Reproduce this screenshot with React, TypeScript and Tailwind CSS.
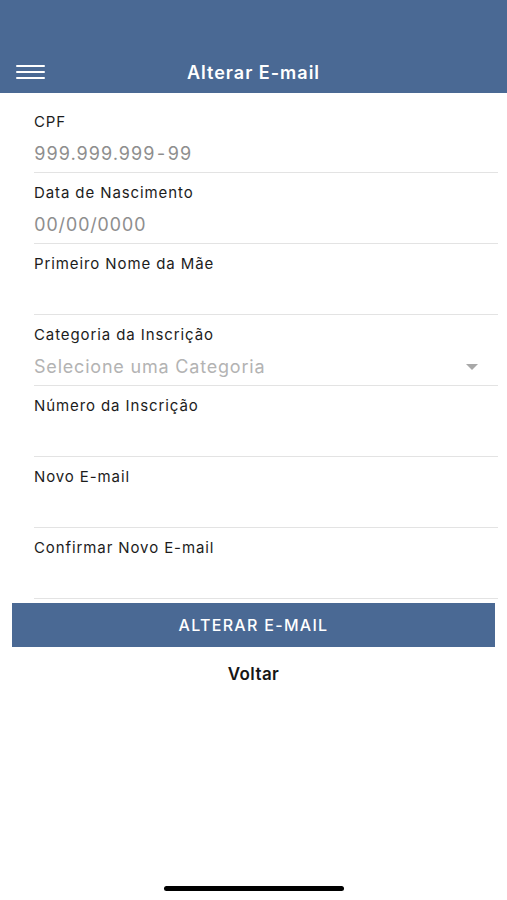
import type { FC } from "react";

interface FieldProps {
  label: string;
  value?: string;
  select?: boolean;
}

const Field: FC<FieldProps> = ({ label, value, select }) => {
  return (
    <div className="ml-[34px] mr-[9px] h-[71px] border-b border-[#e3e3e3] pt-[10px]">
      <p className="text-[15px] leading-[20px] tracking-[0.9px] text-[#1c1c1c]">{label}</p>
      <div className="mt-[10px] flex h-[24px] items-center justify-between">
        <span
          className={`text-[18px] leading-[24px] ${
            select ? "tracking-[0.8px] text-[#b3b3b3]" : "tracking-[0.6px] tabular-nums text-[#8e8e8e]"
          }`}
        >
          {value}
        </span>
        {select ? (
          <svg width="12" height="6" viewBox="0 0 12 6" className="mr-[20px]">
            <path d="M0 0 L12 0 L6 6 Z" fill="#a8a8a8" />
          </svg>
        ) : null}
      </div>
    </div>
  );
};

const fields: FieldProps[] = [
  { label: "CPF", value: "999.999.999-99" },
  { label: "Data de Nascimento", value: "00/00/0000" },
  { label: "Primeiro Nome da Mãe" },
  { label: "Categoria da Inscrição", value: "Selecione uma Categoria", select: true },
  { label: "Número da Inscrição" },
  { label: "Novo E-mail" },
  { label: "Confirmar Novo E-mail" },
];

export default function App() {
  return (
    <div className="flex h-[900px] w-[507px] flex-col bg-white" style={{ fontFamily: "Inter, 'Noto Sans', sans-serif" }}>
      <header className="flex h-[93px] items-end bg-[#4a6994]">
        <div className="relative flex h-[44px] w-full items-center justify-center">
          <button type="button" className="absolute left-[16px] top-[16px] flex w-[29px] flex-col gap-[4px]" aria-label="Menu">
            <span className="h-[2px] w-full rounded bg-white" />
            <span className="h-[2px] w-full rounded bg-white" />
            <span className="h-[2px] w-full rounded bg-white" />
          </button>
          <h1 className="mt-[2px] text-[18px] font-semibold tracking-[1px] text-white">Alterar E-mail</h1>
        </div>
      </header>

      <form className="pt-[9px]">
        {fields.map((f) => (
          <Field key={f.label} {...f} />
        ))}
      </form>

      <div className="mx-[12px] mt-[4px]">
        <button type="button" className="h-[44px] w-full bg-[#4a6994] text-[16px] font-medium tracking-[1.3px] text-white">
          ALTERAR E-MAIL
        </button>
      </div>
      <button type="button" className="mt-[15px] text-[17px] font-semibold tracking-[0.4px] text-[#161616]">
        Voltar
      </button>

      <div className="mt-auto mb-[9px] flex justify-center">
        <div className="h-[5px] w-[180px] rounded-full bg-black" />
      </div>
    </div>
  );
}
